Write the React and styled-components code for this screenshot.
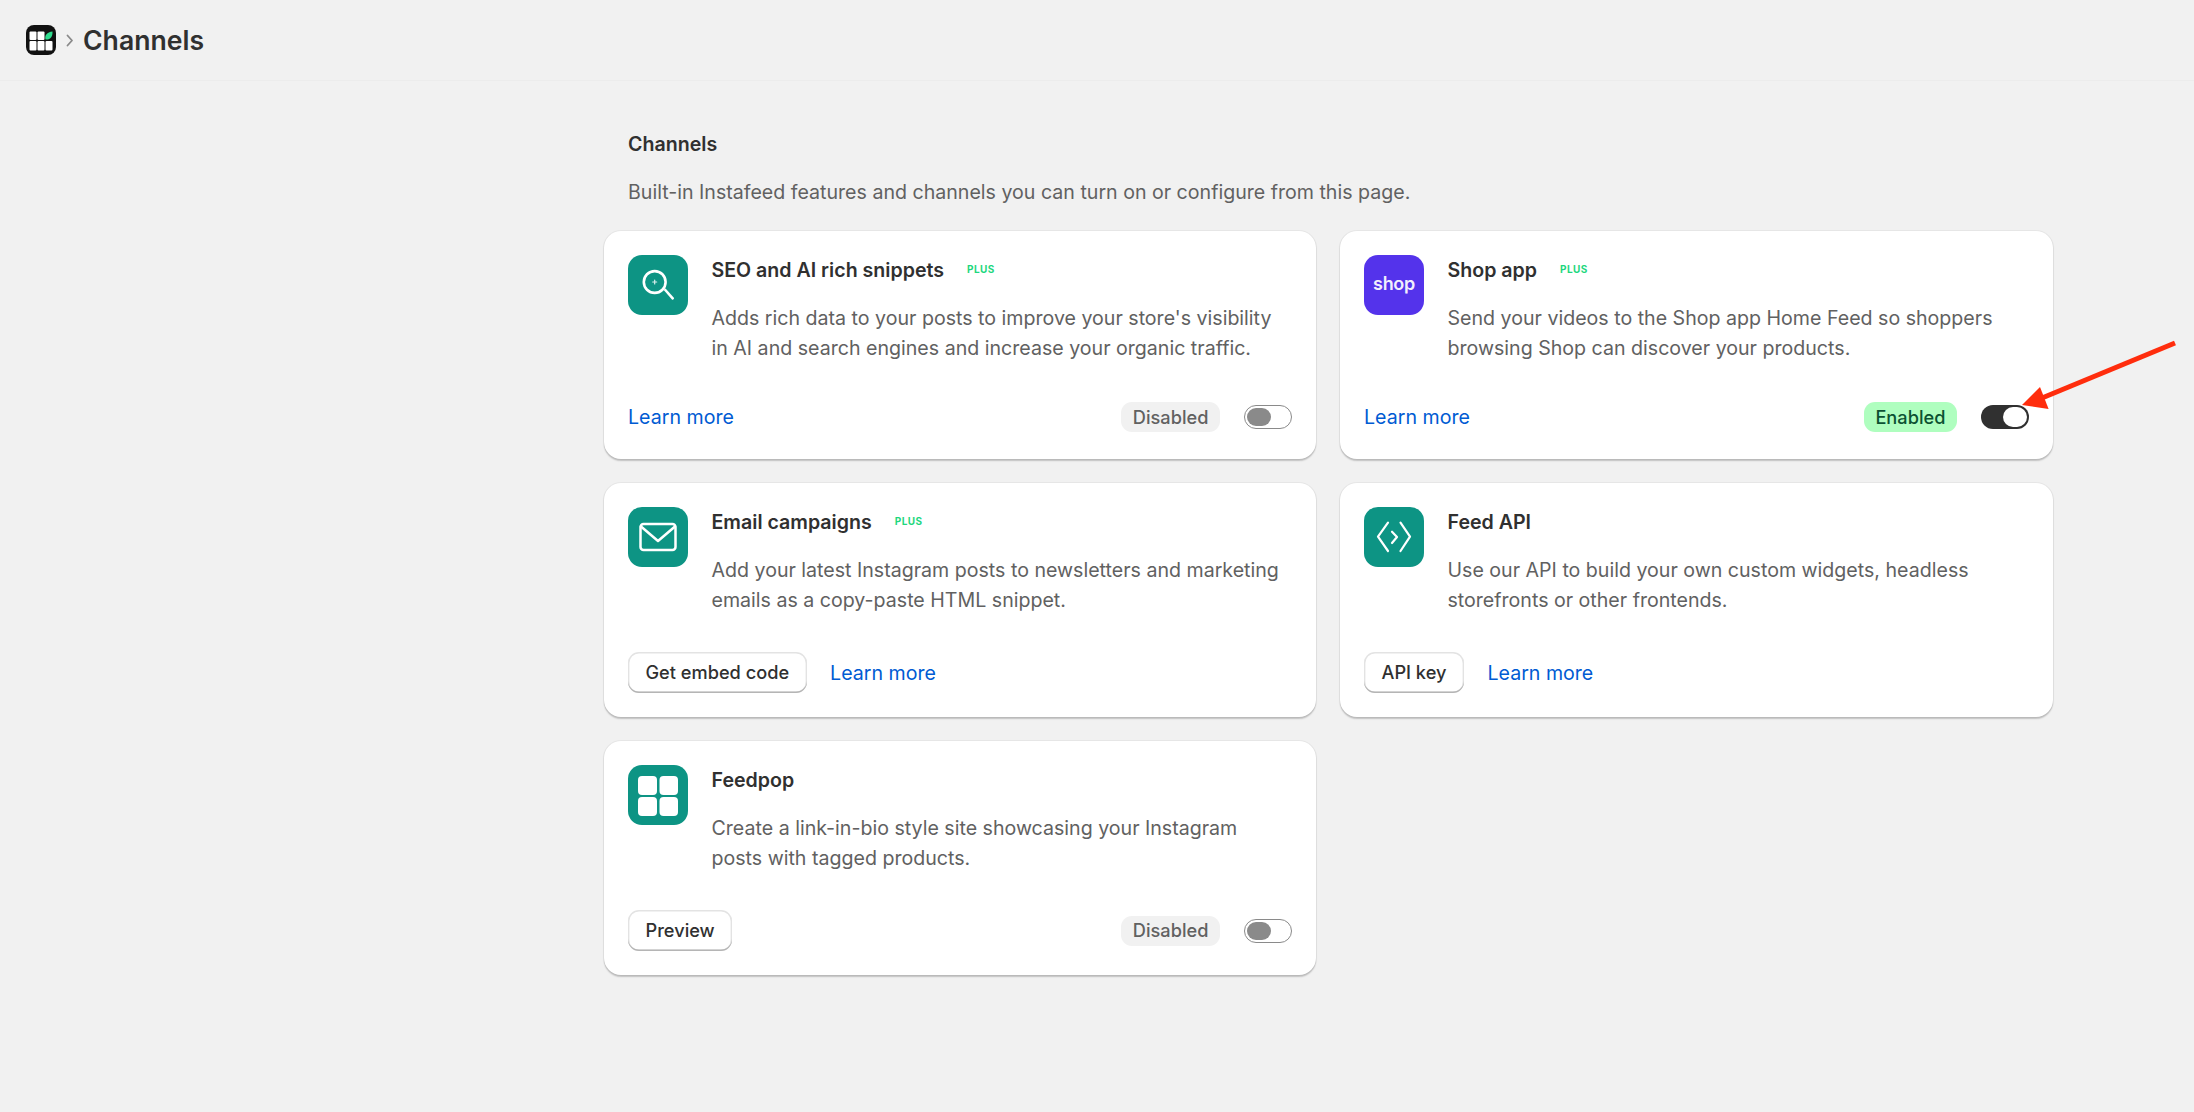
import React from "react";
import styled, { createGlobalStyle } from "styled-components";

const GlobalStyle = createGlobalStyle`
  html, body {
    margin: 0;
    padding: 0;
    background: #f1f1f1;
  }
  body {
    font-family: "Inter", "Liberation Sans", sans-serif;
    color: #303030;
  }
  * {
    box-sizing: border-box;
  }
`;

const Page = styled.div`
  position: relative;
  width: 2194px;
  height: 1112px;
  overflow: hidden;
`;

const TopBar = styled.header`
  height: 81px;
  display: flex;
  align-items: center;
  padding: 0 0 0 26px;
  border-bottom: 1px solid #ececec;
`;

const Breadcrumb = styled.span`
  color: #8a8a8a;
  display: flex;
  margin: 0 7px 0 8px;
`;

const PageTitle = styled.h1`
  margin: 0;
  font-size: 26.6px;
  line-height: 34px;
  font-weight: 600;
  color: #303030;
`;

const Main = styled.main`
  padding: 49px 0 0 604px;
`;

const SectionHead = styled.div`
  padding-left: 24px;
  margin-bottom: 25px;
`;

const SectionTitle = styled.h2`
  margin: 0 0 20px;
  font-size: 19.6px;
  line-height: 28px;
  font-weight: 600;
  color: #303030;
`;

const SectionText = styled.p`
  margin: 0;
  font-size: 19.6px;
  line-height: 28px;
  color: #616161;
`;

const Grid = styled.div`
  display: grid;
  grid-template-columns: 712px 713px;
  column-gap: 24px;
  row-gap: 24px;
  align-items: start;
`;

const Card = styled.section`
  background: #fff;
  border-radius: 17px;
  padding: 24px;
  box-shadow: 0 1.5px 1.5px rgba(0, 0, 0, 0.2), 0 0 0 1px rgba(0, 0, 0, 0.04);
`;

const CardBody = styled.div`
  display: flex;
  gap: 23.5px;
  height: ${(p) => (p.$tall ? 145 : 147)}px;
`;

const IconBox = styled.div`
  flex: none;
  width: 60px;
  height: 60px;
  border-radius: 14px;
  background: ${(p) => p.$bg || "#0d9484"};
  display: flex;
  align-items: center;
  justify-content: center;
  svg {
    display: block;
  }
`;

const ShopWord = styled.span`
  color: #fff;
  font-size: 18px;
  font-weight: 600;
  letter-spacing: -0.3px;
  line-height: 1;
  margin-top: -2px;
  opacity: 0.92;
`;

const CardText = styled.div`
  min-width: 0;
`;

const TitleRow = styled.div`
  display: flex;
  align-items: center;
  gap: 23px;
  height: 30px;
  margin-bottom: 18px;
`;

const CardTitle = styled.h3`
  margin: 0;
  font-size: 19.6px;
  line-height: 30px;
  font-weight: 600;
  color: #303030;
`;

const PlusTag = styled.span`
  font-size: 10px;
  font-weight: 700;
  color: #1ed77e;
  letter-spacing: 0.4px;
  margin-top: -2px;
`;

const CardDesc = styled.p`
  margin: 0;
  font-size: 19.6px;
  line-height: 30px;
  color: #616161;
`;

const CardFooter = styled.div`
  display: flex;
  align-items: center;
  justify-content: space-between;
  height: ${(p) => (p.$compact ? 30 : 41)}px;
  margin-bottom: ${(p) => (p.$compact ? 3 : 0)}px;
`;

const FooterGroup = styled.div`
  display: flex;
  align-items: center;
  gap: ${(p) => p.$gap || 23.5}px;
`;

const LearnMore = styled.a`
  font-size: 19.6px;
  line-height: 28px;
  color: #005bd3;
  cursor: pointer;
`;

const Button = styled.button`
  height: 41px;
  padding: 0 17.5px 2px;
  font-family: inherit;
  font-size: 18.2px;
  font-weight: 500;
  color: #303030;
  background: #fff;
  border: none;
  border-radius: 11px;
  box-shadow: inset 0 -1.5px 0 #b5b5b5, inset 0 0 0 1.4px #e3e3e3;
`;

const StatusBadge = styled.span`
  height: 30px;
  display: flex;
  align-items: center;
  padding: 0 11.6px 1px;
  border-radius: 11px;
  font-size: 18.2px;
  font-weight: 500;
  background: ${(p) => (p.$on ? "#affebf" : "#f1f1f1")};
  color: ${(p) => (p.$on ? "#0c5132" : "#616161")};
`;

const Toggle = styled.span`
  width: 48px;
  height: 24px;
  padding: 2px;
  display: flex;
  justify-content: ${(p) => (p.$on ? "flex-end" : "flex-start")};
  border-radius: 12px;
  background: ${(p) => (p.$on ? "#303030" : "#fff")};
  border: ${(p) => (p.$on ? "none" : "1px solid #8a8a8a")};
`;

const Thumb = styled.span`
  width: 24px;
  height: ${(p) => (p.$on ? 20 : 18)}px;
  border-radius: 10px;
  background: ${(p) => (p.$on ? "#fff" : "#8a8a8a")};
`;

const Arrow = styled.svg`
  position: absolute;
  left: 2010px;
  top: 330px;
`;

const Logo = () => (
  <svg width="30" height="30" viewBox="0 0 30 30">
    <rect width="30" height="30" rx="8" fill="#111" />
    <g fill="#fff">
      <rect x="3.5" y="6.5" width="7" height="8.5" rx="1" />
      <rect x="11.5" y="6.5" width="7" height="8.5" rx="1" />
      <rect x="3.5" y="16" width="7" height="9.5" rx="1" />
      <rect x="11.5" y="16" width="7" height="9.5" rx="1" />
      <rect x="19.5" y="16" width="7" height="9.5" rx="1" />
    </g>
    <path d="M19.5 14.5c-1.2-4 1.5-7.5 7-8 .4 4.6-2 8.5-7 8z" fill="#2fdc8e" />
  </svg>
);

const SearchIcon = () => (
  <svg width="60" height="60" viewBox="0 0 60 60" fill="none" stroke="#fff" strokeLinecap="round">
    <circle cx="26.7" cy="27" r="10.9" strokeWidth="2.6" />
    <path d="M37.3 35l7.4 8.3" strokeWidth="2.6" />
    <path d="M24.7 27h4M26.7 25v4" strokeWidth="1.2" opacity="0.85" />
  </svg>
);

const MailIcon = () => (
  <svg width="60" height="60" viewBox="0 0 60 60" fill="none" stroke="#fff" strokeWidth="2.5" strokeLinejoin="round" strokeLinecap="round">
    <rect x="12.5" y="17" width="35" height="26" rx="3" />
    <path d="M13 19.5L30 34l17-14.5" />
  </svg>
);

const CodeIcon = () => (
  <svg width="60" height="60" viewBox="0 0 60 60" fill="none" stroke="#fff" strokeWidth="2.2" strokeLinecap="round" strokeLinejoin="round">
    <path d="M24 15.7L14 29.7 24 44" />
    <path d="M36.5 15.7L46 29.7 36.5 44" />
    <path d="M28 24.7l5 5.3-5 6" />
  </svg>
);

const TilesIcon = () => (
  <svg width="60" height="60" viewBox="0 0 60 60" fill="#fff">
    <rect x="10" y="11" width="19" height="19" rx="4" />
    <rect x="31.5" y="11" width="18.5" height="19" rx="4" />
    <rect x="10" y="32" width="19" height="19" rx="4" />
    <rect x="31.5" y="32" width="18.5" height="19" rx="4" />
  </svg>
);

const Status = ({ on }) => (
  <FooterGroup $gap={24}>
    <StatusBadge $on={on}>{on ? "Enabled" : "Disabled"}</StatusBadge>
    <Toggle $on={on}>
      <Thumb $on={on} />
    </Toggle>
  </FooterGroup>
);

const ChannelCard = ({ icon, iconBg, title, plus, desc, compact, children }) => (
  <Card>
    <CardBody $tall={!compact}>
      <IconBox $bg={iconBg}>{icon}</IconBox>
      <CardText>
        <TitleRow>
          <CardTitle>{title}</CardTitle>
          {plus && <PlusTag>PLUS</PlusTag>}
        </TitleRow>
        <CardDesc>{desc}</CardDesc>
      </CardText>
    </CardBody>
    <CardFooter $compact={compact}>{children}</CardFooter>
  </Card>
);

const App = () => {
  return (
    <Page>
      <GlobalStyle />
      <TopBar>
        <Logo />
        <Breadcrumb>
          <svg width="12" height="16" viewBox="0 0 12 16" fill="none" stroke="#8a8a8a" strokeWidth="1.8" strokeLinecap="round" strokeLinejoin="round">
            <path d="M3.5 3.5L8 8.5l-4.5 5" />
          </svg>
        </Breadcrumb>
        <PageTitle>Channels</PageTitle>
      </TopBar>
      <Main>
        <SectionHead>
          <SectionTitle>Channels</SectionTitle>
          <SectionText>Built-in Instafeed features and channels you can turn on or configure from this page.</SectionText>
        </SectionHead>
        <Grid>
          <ChannelCard
            compact
            plus
            icon={<SearchIcon />}
            title="SEO and AI rich snippets"
            desc={<>Adds rich data to your posts to improve your store's visibility<br />in AI and search engines and increase your organic traffic.</>}
          >
            <LearnMore>Learn more</LearnMore>
            <Status />
          </ChannelCard>
          <ChannelCard
            compact
            plus
            iconBg="#5433eb"
            icon={<ShopWord>shop</ShopWord>}
            title="Shop app"
            desc={<>Send your videos to the Shop app Home Feed so shoppers<br />browsing Shop can discover your products.</>}
          >
            <LearnMore>Learn more</LearnMore>
            <Status on />
          </ChannelCard>
          <ChannelCard
            plus
            icon={<MailIcon />}
            title="Email campaigns"
            desc={<>Add your latest Instagram posts to newsletters and marketing<br />emails as a copy-paste HTML snippet.</>}
          >
            <FooterGroup>
              <Button>Get embed code</Button>
              <LearnMore>Learn more</LearnMore>
            </FooterGroup>
          </ChannelCard>
          <ChannelCard
            icon={<CodeIcon />}
            title="Feed API"
            desc={<>Use our API to build your own custom widgets, headless<br />storefronts or other frontends.</>}
          >
            <FooterGroup>
              <Button>API key</Button>
              <LearnMore>Learn more</LearnMore>
            </FooterGroup>
          </ChannelCard>
          <ChannelCard
            icon={<TilesIcon />}
            title="Feedpop"
            desc={<>Create a link-in-bio style site showcasing your Instagram<br />posts with tagged products.</>}
          >
            <Button>Preview</Button>
            <Status />
          </ChannelCard>
        </Grid>
      </Main>
      <Arrow width="180" height="90" viewBox="0 0 180 90">
        <path d="M165 13L32 68" stroke="#ff2d0d" strokeWidth="5" fill="none" />
        <polygon points="12,75 30,57 38.6,79" fill="#ff2d0d" />
      </Arrow>
    </Page>
  );
};

export default App;
